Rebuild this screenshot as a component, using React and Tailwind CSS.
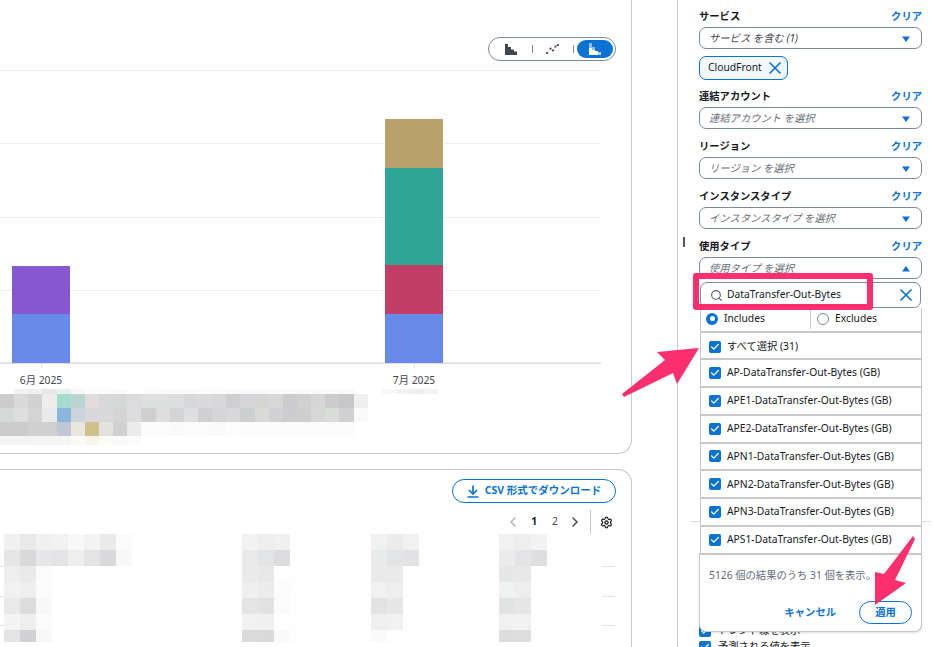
import { Search, X, ChevronLeft, ChevronRight, Settings, Check } from "lucide-react";

const topRows = [
  { h: "h-[5px]", cells: ["#ffffff", "#f2f2f2", "#f0f0f0", "#e8e8e8", "#e6f0ee", "#f4f8f7", "#fcfcfc", "#fcfcfc", "#fafafa", "#ffffff", "#fcfcfc", "#fafafa", "#fafafa", "#fafafa", "#fcfcfc", "#fbfbfb", "#fafafa", "#fafafa", "#fafafa", "#fafafa", "#fafafa", "#fafafa", "#fafafa", "#fafafa", "#fafafa", "#ffffff", "#ffffff", "#f8f8f8", "#f3f3f3", "#efefef", "#f3f3f3"] },
  { h: "h-[14px]", cells: ["#cccccc", "#d9d9d9", "#d2d2d2", "#efecec", "#a4dcd0", "#bcd4d2", "#e2dcdc", "#d8d8da", "#d6d8d6", "#dcdcde", "#dee0e0", "#dee0de", "#dcdee0", "#d8d8da", "#dadadc", "#d8d8da", "#cfcfd1", "#d6d6da", "#d5d6d4", "#d8d6d6", "#ccccce", "#d0d0d0", "#d6d6d6", "#ccccce", "#c8c8ca", "#efefef"] },
  { h: "h-[14px]", cells: ["#d6dad6", "#dedede", "#d4d4d2", "#e8eaec", "#8cb4dc", "#ccd4de", "#d8d8dc", "#d8d8da", "#d4d4d4", "#dcdcdc", "#cfcfd2", "#dedede", "#d4d4d6", "#dedfe0", "#d0d0d2", "#d6d6d8", "#d8d8da", "#cdced0", "#d8dad8", "#d2d2d4", "#cdcdcf", "#cecece", "#d6d8d6", "#dadcda", "#d0d0d2", "#fafafa"] },
  { h: "h-[14px]", cells: ["#cccccc", "#cccccc", "#d0d0d0", "#d0d0d0", "#c0c8d4", "#e8e6e0", "#cfc08c", "#e2e2dc", "#d0d0d2", "#ebebeb", "#fcfcfc", "#fcfcfc", "#fafafa", "#fcfcfc", "#fbfbfb", "#fafafa", "#fdfdfd", "#fcfcfc", "#fcfcfc", "#fbfbfb", "#fcfcfc", "#fbfbfb", "#fcfcfc", "#fbfbfb", "#fbfbfb"] },
  { h: "h-[9px]", cells: ["#f4f4f4", "#f4f4f4", "#f5f5f5", "#f5f5f5", "#f5f5f5", "#fbfaf6", "#f9f5ec", "#fbfbf8", "#f9fafa", "#fbfbfb"] },
];

const tableBlocks = [
  {
    ml: "ml-0",
    rows: [
      ["#f0f0f0", "#e9e9e9", "#f0f0f0", "#f2f2f2", "#f8f8f8", "#f3f3f3", "#eaeaea", "#fbfbfb"],
      ["#e6e6e6", "#d9d9db", "#e6e7e9", "#e4e4e6", "#eeeeee", "#e4e4e6", "#d8d9db", "#f8f8f8"],
      ["#eeeeee", "#e9ebe9", "#fbfbfb"],
      ["#f1f1f1", "#eeeeee", "#fbfbfb"],
      ["#e8e9eb", "#dcdcdc", "#f8f8f8"],
      ["#f4f4f4", "#eeeeee", "#fbfbfb"],
      ["#e4e4e6", "#d2d2d4", "#f8f8f8"],
    ],
  },
  {
    ml: "ml-[110px]",
    rows: [
      ["#f2f2f2", "#eeeeee", "#f0f0f0"],
      ["#e8e9eb", "#e3e4e6", "#dddddf"],
      ["#eaeaea", "#e8e8e8"],
      ["#efefef", "#ececec", "#fcfcfc"],
      ["#e3e4e4", "#e2e2e2", "#fbfbfb"],
      ["#f1f1f1", "#f0f0f0"],
      ["#dadcdc", "#dadadc", "#fafafa"],
    ],
  },
  {
    ml: "ml-[81px]",
    rows: [
      ["#f0f1f1", "#ececec", "#f1f1f1"],
      ["#e9eaec", "#e3e4e6", "#e2e2e4"],
      ["#eaeaea", "#eaeaea"],
      ["#f1f1f1", "#eeeeee"],
      ["#e3e3e3", "#e6e7e6"],
      ["#f0f0f0", "#f1f1f1"],
      ["#fafafa"],
    ],
  },
  {
    ml: "ml-[80px]",
    rows: [
      ["#f0f1f1", "#eeeeee", "#f2f2f4"],
      ["#ebebed", "#e3e4e6", "#dfdfe1"],
      ["#e6e7e7", "#e8e8e8"],
      ["#f0f1f1", "#eeeeee"],
      ["#e2e3e3", "#e6e6e6"],
      ["#f1f1f1", "#f1f1f1"],
      ["#dcdedc", "#dedede"],
    ],
  },
];

const usageRows = [
  "AP-DataTransfer-Out-Bytes (GB)",
  "APE1-DataTransfer-Out-Bytes (GB)",
  "APE2-DataTransfer-Out-Bytes (GB)",
  "APN1-DataTransfer-Out-Bytes (GB)",
  "APN2-DataTransfer-Out-Bytes (GB)",
  "APN3-DataTransfer-Out-Bytes (GB)",
  "APS1-DataTransfer-Out-Bytes (GB)",
];

function Caret({ up = false }) {
  return (
    <svg width="8" height="6" viewBox="0 0 8 6" className="shrink-0">
      <path d={up ? "M4 0 L8 5.5 L0 5.5 Z" : "M0 0.5 L8 0.5 L4 6 Z"} fill="#0972d3" />
    </svg>
  );
}

function Checkbox() {
  return (
    <span className="flex h-[12px] w-[12px] shrink-0 items-center justify-center rounded-[2px] bg-[#0972d3]">
      <Check size={10} strokeWidth={3} color="#ffffff" />
    </span>
  );
}

function FilterLabel({ label }) {
  return (
    <div className="mb-[2px] flex h-[18px] items-center justify-between pt-[2px]">
      <span className="text-[10.3px] font-bold text-[#16191f]">{label}</span>
      <span className="text-[10.3px] font-semibold text-[#0972d3]">クリア</span>
    </div>
  );
}

function FilterInput({ placeholder, dark = false, up = false }) {
  return (
    <div className="flex h-[22px] items-center justify-between rounded-[7px] border border-[#7d8998] bg-white pl-[9px] pr-[11px] pt-[1px]">
      <span className={`text-[10.3px] italic ${dark ? "text-[#414750]" : "text-[#687078]"}`}>{placeholder}</span>
      <Caret up={up} />
    </div>
  );
}

function FilterSection({ label, placeholder, up = false }) {
  return (
    <div className="mb-[8px]">
      <FilterLabel label={label} />
      <FilterInput placeholder={placeholder} up={up} />
    </div>
  );
}

function UsageDropdown() {
  return (
    <div className="absolute left-0 top-[23px] z-10 w-[223px]">
      <div className="ml-[1px] flex h-[26px] w-[221px] translate-y-[2px] items-center rounded-[7px] border border-[#7d8998] bg-white pl-[9px] pr-[4px]">
        <Search size={13} color="#545b64" strokeWidth={2} />
        <span className="ml-[4px] flex-1 text-[10.3px] text-[#16191f]">DataTransfer-Out-Bytes</span>
        <X size={20} color="#0972d3" strokeWidth={2} />
      </div>
      <div className="ml-[1px] mt-[2px] flex h-[23px] w-[222px] border-x border-[#c6c6cd] bg-white pb-[2px]">
        <div className="flex w-[110px] items-center border-r border-[#c6c6cd] pl-[5px]">
          <span className="flex h-[12px] w-[12px] items-center justify-center rounded-full bg-[#0972d3]">
            <span className="h-[5px] w-[5px] rounded-full bg-white" />
          </span>
          <span className="ml-[6px] text-[10.3px] text-[#16191f]">Includes</span>
        </div>
        <div className="flex flex-1 items-center pl-[6px]">
          <span className="h-[12px] w-[12px] rounded-full border border-[#7d8998]" />
          <span className="ml-[6px] text-[10.3px] text-[#16191f]">Excludes</span>
        </div>
      </div>
      <div className="ml-[1px] w-[222px] bg-white">
        <div className="flex h-[27px] items-center border-x border-t-2 border-[#c6c6cd] pl-[8px] pt-[2px]">
          <Checkbox />
          <span className="ml-[6px] text-[10.3px] text-[#16191f]">すべて選択 (31)</span>
        </div>
        {usageRows.map((row) => (
          <div key={row} className="flex h-[27.85px] items-center border-x border-t-2 border-[#c6c6cd] pl-[8px]">
            <Checkbox />
            <span className="ml-[6px] text-[10.3px] text-[#16191f]">{row}</span>
          </div>
        ))}
      </div>
      <div className="h-[79px] rounded-b-[7px] border border-t-2 border-[#c6c6cd] bg-white px-[9px] shadow-sm">
        <div className="pt-[13px] text-[10.3px] text-[#5f6b7a]">5126 個の結果のうち 31 個を表示。</div>
        <div className="mt-[18px] flex items-center justify-end gap-[23px]">
          <span className="text-[10.3px] font-bold text-[#0972d3]">キャンセル</span>
          <span className="flex h-[23px] w-[53px] items-center justify-center rounded-full border border-[#0972d3] text-[10.3px] font-bold text-[#0972d3]">
            適用
          </span>
        </div>
      </div>
    </div>
  );
}

function Sidebar() {
  return (
    <aside className="relative h-[647px] w-[257px] shrink-0 border-l border-[#c6c6cd] pl-[21px] pr-[12px] pt-[7px]">
      <div className="absolute left-[5px] top-[237px] h-[10px] w-[2px] bg-[#545b64]" />
      <div className="mb-[7px]">
        <FilterLabel label="サービス" />
        <FilterInput placeholder="サービス を含む (1)" dark />
        <div className="mt-[7px] flex h-[24px] w-[89px] items-center rounded-[7px] border border-[#0972d3] bg-[#f2f8fd] pl-[8px]">
          <span className="text-[10.3px] text-[#16191f]">CloudFront</span>
          <X size={20} color="#0972d3" strokeWidth={2} className="ml-[3px]" />
        </div>
      </div>
      <FilterSection label="連結アカウント" placeholder="連結アカウント を選択" />
      <FilterSection label="リージョン" placeholder="リージョン を選択" />
      <FilterSection label="インスタンスタイプ" placeholder="インスタンスタイプ を選択" />
      <div className="relative">
        <FilterSection label="使用タイプ" placeholder="使用タイプ を選択" up />
        <div className="absolute inset-x-0 top-0">
          <div className="h-[20px]" />
          <div className="relative h-[22px]">
            <UsageDropdown />
          </div>
        </div>
      </div>
      <div className="-mx-[8px] mt-[242px] border-t border-[#d5dbdb]" />
      <div className="mt-[101px] flex h-[16px] items-center">
        <Checkbox />
        <span className="ml-[7px] text-[10.3px] text-[#16191f]">トレンド線を表示</span>
      </div>
      <div className="flex h-[16px] items-center">
        <Checkbox />
        <span className="ml-[7px] text-[10.3px] text-[#16191f]">予測される値を表示</span>
      </div>
    </aside>
  );
}

function ChartToggle() {
  return (
    <div className="flex h-[24px] w-[128px] items-center rounded-full border border-[#7d8998] bg-white p-[2px]">
      <div className="flex w-[41px] justify-center">
        <svg width="12" height="11" viewBox="0 0 12 11" fill="#414750">
          <rect x="0" y="0" width="3" height="11" />
          <rect x="3" y="3" width="3" height="8" />
          <rect x="6" y="5.5" width="3" height="5.5" />
          <rect x="9" y="7.5" width="3" height="3.5" />
        </svg>
      </div>
      <div className="h-[8px] w-px bg-[#7d8998]" />
      <div className="flex w-[41px] justify-center">
        <svg width="13" height="10" viewBox="0 0 13 10" fill="#414750">
          <path d="M1 9 L4.5 4.5 L7 6.5 L9.5 2.5 L12 1" stroke="#414750" strokeWidth="0.5" strokeDasharray="1 1" fill="none" />
          <circle cx="1" cy="9" r="1.1" />
          <circle cx="4.5" cy="4.5" r="1.1" />
          <circle cx="7" cy="6.5" r="1.1" />
          <circle cx="9.5" cy="2.5" r="1.1" />
          <circle cx="12" cy="1" r="1.1" />
        </svg>
      </div>
      <div className="h-[8px] w-px bg-[#7d8998]" />
      <div className="ml-[3px] flex h-[18px] w-[36px] items-center justify-center rounded-full bg-[#0972d3]">
        <svg width="12" height="12" viewBox="0 0 12 12" fill="#ffffff">
          <rect x="0" y="0" width="3" height="5" opacity="0.55" />
          <rect x="0" y="5" width="3" height="7" />
          <rect x="3" y="4" width="3" height="3" opacity="0.55" />
          <rect x="3" y="7" width="3" height="5" />
          <rect x="6" y="8" width="3" height="4" />
          <rect x="9" y="9" width="3" height="3" opacity="0.7" />
        </svg>
      </div>
    </div>
  );
}

function Chart() {
  return (
    <svg width="631" height="313" viewBox="0 61 631 313" className="block">
      {[70, 143, 217, 290].map((y) => (
        <rect key={y} x="0" y={y} width="601" height="1" fill="#eeeeee" />
      ))}
      <rect x="0" y="362.5" width="601" height="1.5" fill="#dcdcdc" />
      <rect x="41" y="364" width="1" height="4" fill="#e2e2e2" />
      <rect x="414" y="364" width="1" height="4" fill="#e2e2e2" />
      <rect x="12" y="266" width="58" height="48" fill="#8757cf" />
      <rect x="12" y="314" width="58" height="49" fill="#688ae8" />
      <rect x="385" y="119" width="58" height="49" fill="#b8a269" />
      <rect x="385" y="168" width="58" height="97" fill="#2ea597" />
      <rect x="385" y="265" width="58" height="49" fill="#c33d69" />
      <rect x="385" y="314" width="58" height="49" fill="#688ae8" />
    </svg>
  );
}

function ChartCard() {
  return (
    <section className="h-[454px] w-full overflow-hidden rounded-br-[14px] border-b border-r border-[#c6c6cd] bg-white">
      <div className="flex justify-end pr-[15px] pt-[37px]">
        <ChartToggle />
      </div>
      <Chart />
      <div className="flex h-[15px] items-center pb-[2px] text-[10.3px] text-[#414750]">
        <span className="ml-[12px] w-[58px] whitespace-nowrap text-center">6月 2025</span>
        <span className="ml-[315px] w-[58px] whitespace-nowrap text-center">7月 2025</span>
      </div>
      {topRows.map((row, i) => (
        <div key={i} className={`flex ${row.h}`}>
          {row.cells.map((color, j) => (
            <div key={j} className="h-full w-[14.15px] shrink-0" style={{ backgroundColor: color }} />
          ))}
        </div>
      ))}
    </section>
  );
}

function DownloadIcon() {
  return (
    <svg width="12" height="13" viewBox="0 0 12 13" fill="none" stroke="#0972d3" strokeWidth="1.7" className="mr-[6px]">
      <path d="M6 0.5 V8.5" />
      <path d="M2 5 L6 9 L10 5" />
      <path d="M0.5 12 H11.5" />
    </svg>
  );
}

function TableCard() {
  return (
    <section className="mt-[15px] h-[190px] w-full overflow-hidden rounded-tr-[14px] border-r border-t border-[#c6c6cd] bg-white">
      <div className="flex justify-end pr-[15px] pt-[9px]">
        <div className="flex h-[24px] w-[164px] items-center justify-center rounded-full border border-[#0972d3] text-[10.5px] font-bold text-[#0972d3]">
          <DownloadIcon />
          CSV 形式でダウンロード
        </div>
      </div>
      <div className="mt-[7px] flex h-[24px] items-center justify-end pr-[18px]">
        <ChevronLeft size={16} color="#aab7b8" strokeWidth={2.2} />
        <span className="ml-[10px] text-[10.3px] font-bold text-[#16191f]">1</span>
        <span className="ml-[15px] text-[10.3px] text-[#414750]">2</span>
        <ChevronRight size={16} color="#414750" strokeWidth={2.2} className="ml-[9px]" />
        <div className="ml-[7px] h-[24px] w-px bg-[#c6c6cd]" />
        <Settings size={13} color="#16191f" strokeWidth={2.2} className="ml-[9px]" />
      </div>
      <div className="relative">
        {[32, 62, 91].map((top) => (
          <div key={top} className="absolute left-0 h-px w-[615px] bg-[#e4e4e4]" style={{ top }} />
        ))}
        <div className="relative ml-[4px] flex w-[598px] bg-[#fefefe]">
          {tableBlocks.map((block, i) => (
            <div key={i} className={block.ml}>
              {block.rows.map((cells, r) => (
                <div key={r} className={`flex ${r === 6 ? "h-[12px]" : "h-[16px]"}`}>
                  {cells.map((color, c) => (
                    <div key={c} className="h-full w-[16px] shrink-0" style={{ backgroundColor: color }} />
                  ))}
                </div>
              ))}
            </div>
          ))}
        </div>
      </div>
    </section>
  );
}

function Annotations() {
  return (
    <>
      <div className="absolute left-[693px] top-[273px] z-20 h-[37px] w-[180px] rounded-[3px] border-[6px] border-[#fb2f6e]" />
      <svg className="absolute left-0 top-0 z-20" width="934" height="647" viewBox="0 0 934 647">
        <path d="M622 394 L665 360 L657 352 L699 348 L677 384 L673 373 L624 397 Z" fill="#fb2f6e" />
        <path d="M913 536 L915 539 L895 580 L906 583 L875 605 L875 572 L884 574 Z" fill="#fb2f6e" />
      </svg>
    </>
  );
}

export default function App() {
  return (
    <div
      className="relative flex h-[647px] w-[934px] overflow-hidden bg-white"
      style={{ fontFamily: '"Noto Sans", "Noto Sans CJK JP", sans-serif' }}
    >
      <main className="w-[632px] shrink-0">
        <ChartCard />
        <TableCard />
      </main>
      <div className="w-[45px] shrink-0" />
      <Sidebar />
      <Annotations />
    </div>
  );
}
